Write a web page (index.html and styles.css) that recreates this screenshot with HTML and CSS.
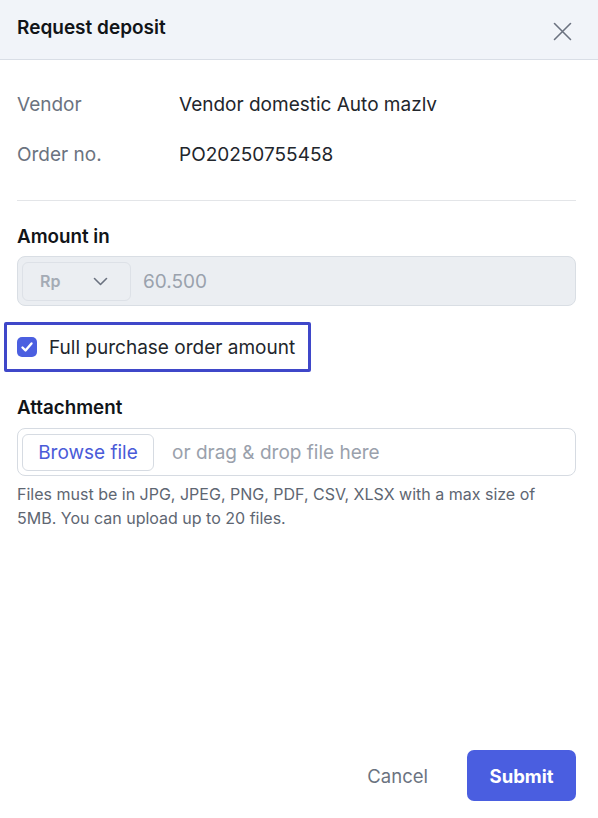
FILE: index.html
```html
<!DOCTYPE html>
<html lang="en">
<head>
<meta charset="utf-8">
<title>Request deposit</title>
<link rel="stylesheet" href="styles.css">
</head>
<body>
<div class="modal">
  <header class="modal-header">
    <h1 class="modal-title">Request deposit</h1>
    <button class="close-btn" aria-label="Close">
      <svg width="19" height="19" viewBox="0 0 19 19" fill="none" stroke="#6b7280" stroke-width="1.6" stroke-linecap="round"><path d="M1.5 1.5L17.5 17.5M17.5 1.5L1.5 17.5"/></svg>
    </button>
  </header>
  <main class="modal-body">
    <div class="info">
      <div class="info-row"><span class="info-label">Vendor</span><span class="info-value">Vendor domestic Auto mazlv</span></div>
      <div class="info-row"><span class="info-label">Order no.</span><span class="info-value">PO20250755458</span></div>
    </div>
    <hr class="divider">
    <div class="field-label">Amount in</div>
    <div class="amount-input">
      <div class="currency-select">
        <span class="currency">Rp</span>
        <svg width="15" height="9" viewBox="0 0 15 9" fill="none" stroke="#6b7280" stroke-width="1.6" stroke-linecap="round" stroke-linejoin="round"><path d="M1.5 1.5L7.5 7.5L13.5 1.5"/></svg>
      </div>
      <span class="amount-value">60.500</span>
    </div>
    <div class="check-highlight">
      <span class="checkbox">
        <svg width="14" height="14" viewBox="0 0 14 14" fill="none" stroke="#fff" stroke-width="2.4" stroke-linecap="round" stroke-linejoin="round"><path d="M2.5 7.5L5.5 10.5L11.5 3.5"/></svg>
      </span>
      <span class="check-label">Full purchase order amount</span>
    </div>
    <div class="field-label attach-label">Attachment</div>
    <div class="upload">
      <button class="browse-btn">Browse file</button>
      <span class="upload-hint">or drag &amp; drop file here</span>
    </div>
    <p class="help">Files must be in JPG, JPEG, PNG, PDF, CSV, XLSX with a max size of 5MB. You can upload up to 20 files.</p>
  </main>
  <footer class="modal-footer">
    <button class="cancel-btn">Cancel</button>
    <button class="submit-btn">Submit</button>
  </footer>
</div>
</body>
</html>
```

FILE: styles.css
```css
* { box-sizing: border-box; }
html, body { margin: 0; padding: 0; }
body {
  font-family: Inter, "Noto Sans", "Liberation Sans", sans-serif;
  color: #1f2329;
  background: #fff;
}
button { font-family: inherit; }
.modal {
  width: 598px;
  height: 818px;
  display: flex;
  flex-direction: column;
  background: #fff;
}
.modal-header {
  height: 60px;
  background: #f1f4f9;
  border-bottom: 1px solid #d9dee6;
  display: flex;
  align-items: center;
  justify-content: space-between;
  padding: 0 26px 0 17px;
}
.modal-title {
  margin: 0 0 3px 0;
  font-size: 19px;
  line-height: 24px;
  font-weight: 600;
  color: #111418;
}
.close-btn {
  border: 0;
  background: none;
  padding: 0;
  margin-top: 4px;
  display: flex;
}
.modal-body {
  padding: 33px 22px 0 17px;
  display: flex;
  flex-direction: column;
}
.info { display: flex; flex-direction: column; gap: 26px; }
.info-row { display: flex; font-size: 19px; line-height: 24px; }
.info-label { width: 162px; color: #6b7380; }
.info-value { color: #22262c; }
.divider {
  border: 0;
  border-top: 1px solid #e3e5e8;
  margin: 33px 0 0 0;
  height: 0;
}
.field-label {
  margin-top: 24px;
  font-size: 18.8px;
  line-height: 24px;
  font-weight: 600;
  color: #111418;
}
.amount-input {
  margin-top: 7px;
  height: 50px;
  background: #ebeef2;
  border: 1px solid #d9dee4;
  border-radius: 8px;
  display: flex;
  align-items: center;
  padding: 0 0 0 4px;
}
.currency-select {
  width: 109px;
  height: 39px;
  border: 1px solid #dde1e7;
  border-radius: 6px;
  display: flex;
  align-items: center;
  justify-content: space-between;
  padding: 0 22px 0 17px;
}
.currency { font-size: 16px; font-weight: 600; color: #a4abb5; }
.amount-value { margin-left: 12px; font-size: 19px; color: #9aa2ad; }
.check-highlight {
  margin: 16px 0 0 -13px;
  width: 307px;
  height: 50px;
  border: 3px solid #3f47c9;
  border-radius: 2px;
  display: flex;
  align-items: center;
  padding-left: 10px;
  gap: 12px;
}
.checkbox {
  width: 20px;
  height: 20px;
  border-radius: 5px;
  background: #4b5fe0;
  display: flex;
  align-items: center;
  justify-content: center;
}
.check-label { font-size: 19px; color: #22262c; }
.attach-label { margin-top: 24px; }
.upload {
  margin-top: 8px;
  height: 48px;
  border: 1px solid #d6dbe2;
  border-radius: 8px;
  display: flex;
  align-items: center;
  padding-left: 4px;
}
.browse-btn {
  width: 132px;
  height: 37px;
  border: 1px solid #d6dbe2;
  border-radius: 6px;
  background: #fff;
  color: #4a5bd8;
  font-size: 19px;
  padding: 0;
}
.upload-hint { margin-left: 18px; font-size: 19px; color: #9aa1ac; }
.help {
  margin: 6px 0 0 0;
  font-size: 16px;
  line-height: 24px;
  color: #5e6672;
  padding-right: 20px;
}
.modal-footer {
  margin-top: auto;
  padding: 0 22px 17px 17px;
  display: flex;
  justify-content: flex-end;
  align-items: center;
  gap: 39px;
}
.cancel-btn {
  border: 0;
  background: none;
  padding: 0;
  font-size: 18.5px;
  color: #6b7380;
}
.submit-btn {
  width: 109px;
  height: 51px;
  border: 0;
  border-radius: 7px;
  background: #4a5ee0;
  color: #fff;
  font-size: 18.5px;
  font-weight: 700;
}
```
